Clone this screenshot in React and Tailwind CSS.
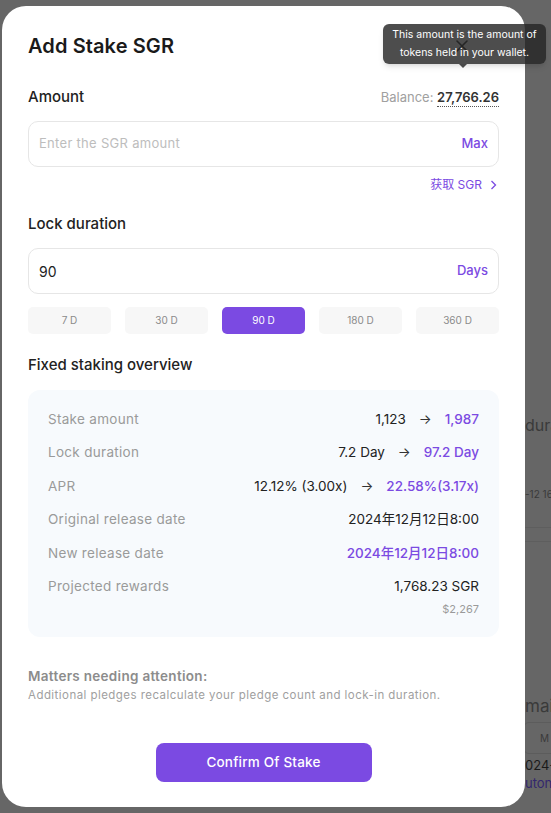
import React from 'react';

const purple = 'text-[#7b4ae2]';

const chips = ['7 D', '30 D', '90 D', '180 D', '360 D'];

const Row = ({ label, children }) => (
  <div className="flex items-center justify-between h-[33.4px]">
    <span className="text-[13.5px] text-[#9a9a9a] tracking-[0.3px]">{label}</span>
    <span className="flex items-center gap-2 text-[13.5px] text-[#222]">{children}</span>
  </div>
);

const Arrow = () => <span className="mx-[5px] text-[#333]">→</span>;

const App = () => {
  return (
    <div
      className="relative w-[551px] h-[813px] overflow-hidden bg-[#666666]"
      style={{ fontFamily: 'Inter, "Noto Sans CJK SC", sans-serif' }}
    >
      {/* dimmed page behind the modal, only its right edge shows */}
      <div className="absolute inset-y-0 left-[525px] right-0 pt-[413px] text-[#3a3a3a] whitespace-nowrap">
        <div className="text-[16px] leading-[24px]">dura</div>
        <div className="mt-[50px] text-[10px] leading-[14px]">-12 16</div>
        <div className="mt-[26px] -ml-[30px] border-t border-b border-[#5e5e5e] h-[15px]"></div>
        <div className="mt-[152px] text-[17px] leading-[24px]">mai</div>
        <div className="mt-[4px] h-[32px] w-[60px] -ml-[2px] rounded-l-md border border-[#5c5c5c] pl-[16px] text-[10px] flex items-center">M</div>
        <div className="mt-[2px] text-[13px] leading-[18px] text-[#1a1a1a]">024-</div>
        <div className="text-[13px] leading-[18px] text-[#33266e]">uton</div>
      </div>

      {/* modal */}
      <div className="absolute left-[2px] top-[6px] w-[523px] h-[801px] rounded-[24px] bg-white px-[26px] pt-[25px]">
        <div className="flex items-center justify-between">
          <h1 className="text-[20px] font-semibold text-[#1a1a1a] tracking-[0.1px]">Add Stake SGR</h1>
          <svg width="14" height="14" viewBox="0 0 14 14" className="mr-[30px]">
            <path d="M2 2 L12 12 M12 2 L2 12" stroke="#222" strokeWidth="1.6" strokeLinecap="round" />
          </svg>
        </div>

        <div className="mt-[25px] flex items-center justify-between">
          <span className="text-[15px] font-medium text-[#222]">Amount</span>
          <span className="text-[13px] text-[#a0a0a0]">
            Balance:{' '}
            <span className="font-semibold text-[#333] border-b border-dotted border-[#555] pb-[1px]">27,766.26</span>
          </span>
        </div>

        <div className="mt-[12px] h-[46px] rounded-[10px] border border-[#e6e6e6] flex items-center justify-between px-[10px]">
          <span className="text-[13px] text-[#bdbdbd] tracking-[0.3px]">Enter the SGR amount</span>
          <span className={`text-[13px] font-medium ${purple}`}>Max</span>
        </div>

        <div className={`mt-[9px] flex items-center justify-end gap-[8px] pr-[2px] text-[12px] ${purple}`}>
          <span>获取 SGR</span>
          <svg width="7" height="10" viewBox="0 0 7 10">
            <path d="M1.5 1 L5.5 5 L1.5 9" fill="none" stroke="#7b4ae2" strokeWidth="1.3" />
          </svg>
        </div>

        <div className="mt-[19px] text-[15px] font-medium text-[#222]">Lock duration</div>

        <div className="mt-[13px] h-[46px] rounded-[10px] border border-[#e6e6e6] flex items-center justify-between px-[10px]">
          <span className="text-[14px] text-[#222]">90</span>
          <span className={`text-[13px] font-medium ${purple}`}>Days</span>
        </div>

        <div className="mt-[13px] grid grid-cols-5 gap-[14px]">
          {chips.map((c) => (
            <div
              key={c}
              className={
                c === '90 D'
                  ? 'h-[27px] rounded-[5px] bg-[#7b4ae2] text-white text-[10px] flex items-center justify-center'
                  : 'h-[27px] rounded-[5px] bg-[#f7f7f7] text-[#8a8a8a] text-[10px] flex items-center justify-center'
              }
            >
              {c}
            </div>
          ))}
        </div>

        <div className="mt-[20px] text-[15px] font-medium text-[#222]">Fixed staking overview</div>

        <div className="mt-[13px] rounded-[12px] bg-[#f7fafd] px-[20px] pt-[13px] pb-[20px]">
          <Row label="Stake amount">
            <span>1,123</span>
            <Arrow />
            <span className={`font-medium ${purple}`}>1,987</span>
          </Row>
          <Row label="Lock duration">
            <span>7.2 Day</span>
            <Arrow />
            <span className={`font-medium ${purple}`}>97.2 Day</span>
          </Row>
          <Row label="APR">
            <span>12.12% (3.00x)</span>
            <Arrow />
            <span className={`font-medium ${purple}`}>22.58%(3.17x)</span>
          </Row>
          <Row label="Original release date">
            <span>2024年12月12日8:00</span>
          </Row>
          <Row label="New release date">
            <span className={`font-medium ${purple}`}>2024年12月12日8:00</span>
          </Row>
          <Row label="Projected rewards">
            <span>1,768.23 SGR</span>
          </Row>
          <div className="text-right text-[11px] text-[#9a9a9a] -mt-[2px]">$2,267</div>
        </div>

        <div className="mt-[29px] text-[13.5px] font-semibold text-[#8c8c8c] tracking-[0.3px]">Matters needing attention:</div>
        <div className="text-[11.5px] text-[#a0a0a0] tracking-[0.45px]">Additional pledges recalculate your pledge count and lock-in duration.</div>

        <div className="mt-[39px] flex justify-center">
          <button className="w-[216px] h-[39px] rounded-[8px] bg-[#7b4ae2] text-white text-[13.5px] font-medium tracking-[0.2px]">
            Confirm Of Stake
          </button>
        </div>
      </div>

      {/* tooltip over balance */}
      <div className="absolute left-[383px] top-[24px] w-[163px] h-[40px] rounded-[6px] bg-[rgba(38,38,38,0.82)] text-white text-[10.5px] leading-[18px] text-center flex flex-col justify-center shadow-md">
        <span>This amount is the amount of</span>
        <span>tokens held in your wallet.</span>
        <span className="absolute left-[76px] -bottom-[4px] w-0 h-0 border-l-[4px] border-r-[4px] border-t-[4px] border-l-transparent border-r-transparent border-t-[rgba(38,38,38,0.82)]"></span>
      </div>
    </div>
  );
};

export default App;
